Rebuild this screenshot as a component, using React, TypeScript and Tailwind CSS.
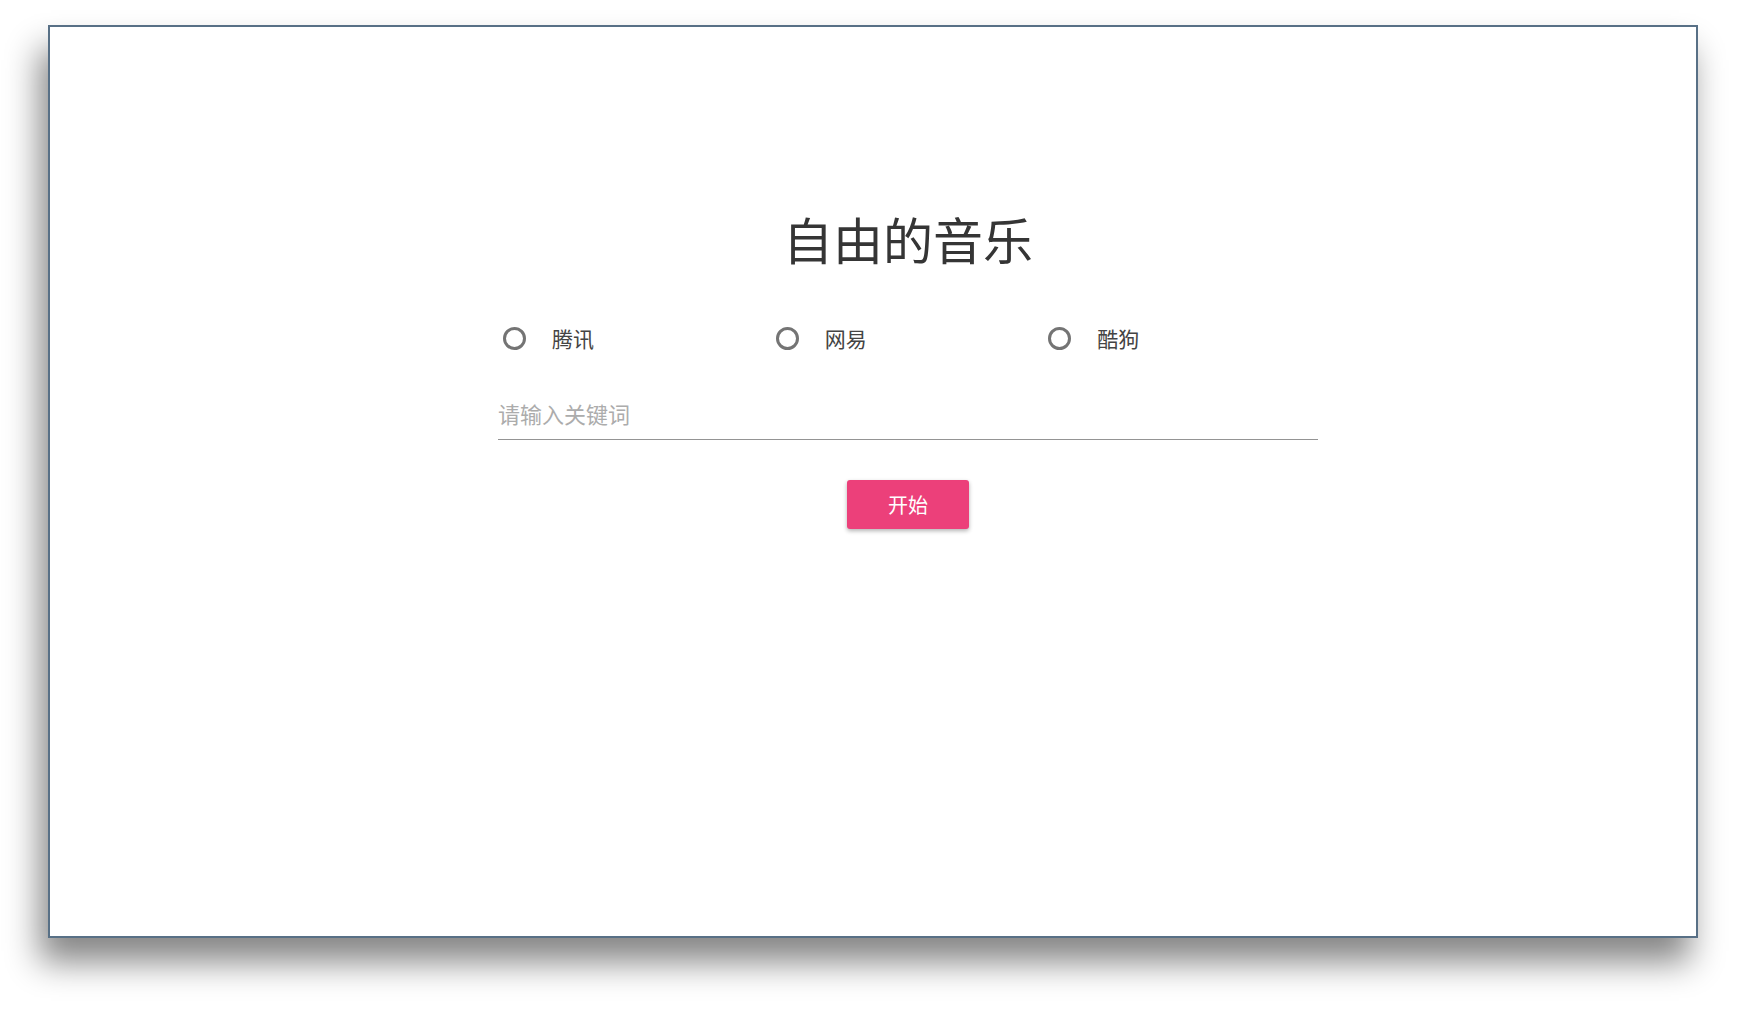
import { useState } from "react";

const sources = ["腾讯", "网易", "酷狗"];

const cjk = { fontFamily: '"Noto Sans CJK SC", "Noto Sans", sans-serif' };

export default function App() {
  const [source, setSource] = useState<string | null>(null);
  const [keyword, setKeyword] = useState("");

  return (
    <div className="w-[1746px] h-[1010px] bg-white overflow-hidden" style={cjk}>
      <div className="ml-[48px] mt-[25px] w-[1650px] h-[913px] box-border border-2 border-[#587086] bg-white shadow-[-8px_24px_32px_rgba(0,0,0,0.48)] pl-[448px] pt-[186px]">
        <div className="w-[820px] flex flex-col items-center">
          {/* Title */}
          <h1 className="text-[50px] leading-[50px] font-normal text-[#353535]">
            自由的音乐
          </h1>

          {/* Source radios */}
          <div className="mt-[61px] w-[818px] self-start grid grid-cols-3">
            {sources.map((s) => (
              <label
                key={s}
                className="flex items-center h-[28px] pl-[5px] cursor-pointer"
                onClick={() => setSource(s)}
              >
                <span className="w-[23px] h-[23px] rounded-full border-[3px] border-[#747474] flex items-center justify-center box-border">
                  {source === s && (
                    <span className="w-[11px] h-[11px] rounded-full bg-[#ec407a]" />
                  )}
                </span>
                <span className="ml-[26px] text-[21px] leading-[28px] text-[#444]">
                  {s}
                </span>
              </label>
            ))}
          </div>

          {/* Keyword input */}
          <input
            value={keyword}
            onChange={(e) => setKeyword(e.target.value)}
            placeholder="请输入关键词"
            className="mt-[44px] w-full h-[44px] box-border pb-[10px] border-b border-[#949494] outline-none text-[22px] text-[#333] placeholder:text-[#acacac] bg-transparent"
            style={cjk}
          />

          {/* Start button */}
          <button
            className="mt-[40px] w-[122px] h-[49px] rounded-[3px] bg-[#ec407a] text-white text-[20px] shadow-[0_2px_4px_rgba(0,0,0,0.3)]"
            style={cjk}
          >
            开始
          </button>
        </div>
      </div>
    </div>
  );
}
